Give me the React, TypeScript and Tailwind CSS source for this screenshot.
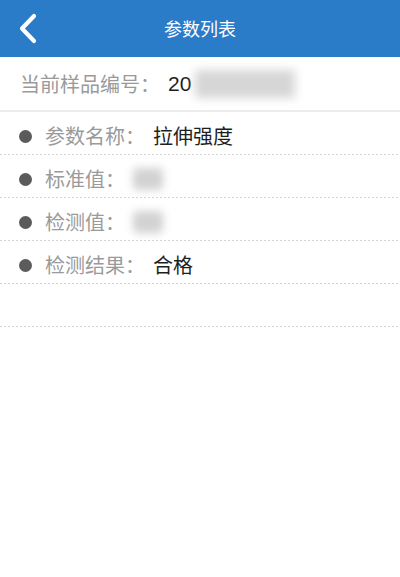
import React from "react";

const font = { fontFamily: '"Noto Sans CJK SC", "Noto Sans", sans-serif' };

function Dotted() {
  return (
    <div className="h-px w-full bg-[linear-gradient(to_right,#d4d4d4_50%,transparent_50%)] bg-[length:4px_1px] bg-repeat-x" />
  );
}

function Blur({ w }: { w: string }) {
  return (
    <span className={`ml-2 inline-block h-[22px] ${w} rounded-sm bg-[#d2d2d2] blur-[4px]`} />
  );
}

function Row({ label, value, blur }: { label: string; value?: string; blur?: boolean }) {
  return (
    <div>
      <div className="flex h-[42px] items-center pl-[19px] pt-[6px]">
        <span className="h-[13px] w-[13px] rounded-full bg-[#5b5b5b]" />
        <span className="ml-[13px] text-[20px] leading-none text-[#9a9a9a]">{label}</span>
        {value && <span className="ml-2 text-[20px] leading-none text-[#1e1e1e]">{value}</span>}
        {blur && <Blur w="w-[30px]" />}
      </div>
      <Dotted />
    </div>
  );
}

export default function App() {
  return (
    <div className="h-[577px] w-[400px] bg-white" style={font}>
      <div className="relative flex h-[57px] items-center justify-center bg-[#2a7bc8]">
        <svg className="absolute left-[14px] top-[12px]" width="30" height="34" viewBox="0 0 30 34">
          <path d="M20 4 L8 16.5 L20 29" fill="none" stroke="white" strokeWidth="4.2" strokeLinecap="round" strokeLinejoin="round" />
        </svg>
        <span className="text-[18px] text-white">参数列表</span>
      </div>
      <div className="flex h-[53px] items-center pl-5">
        <span className="text-[20px] leading-none text-[#9a9a9a]">当前样品编号：</span>
        <span className="ml-2 font-['Liberation_Sans',sans-serif] text-[21px] leading-none text-[#1e1e1e]">20</span>
        <span className="ml-[4px] inline-block h-[28px] w-[100px] bg-[#d6d6d6] blur-[5px]" />
      </div>
      <div className="h-[2px] w-full bg-[#ececec]" />
      <Row label="参数名称：" value="拉伸强度" />
      <Row label="标准值：" blur />
      <Row label="检测值：" blur />
      <Row label="检测结果：" value="合格" />
      <div className="h-[42px]" />
      <Dotted />
    </div>
  );
}
